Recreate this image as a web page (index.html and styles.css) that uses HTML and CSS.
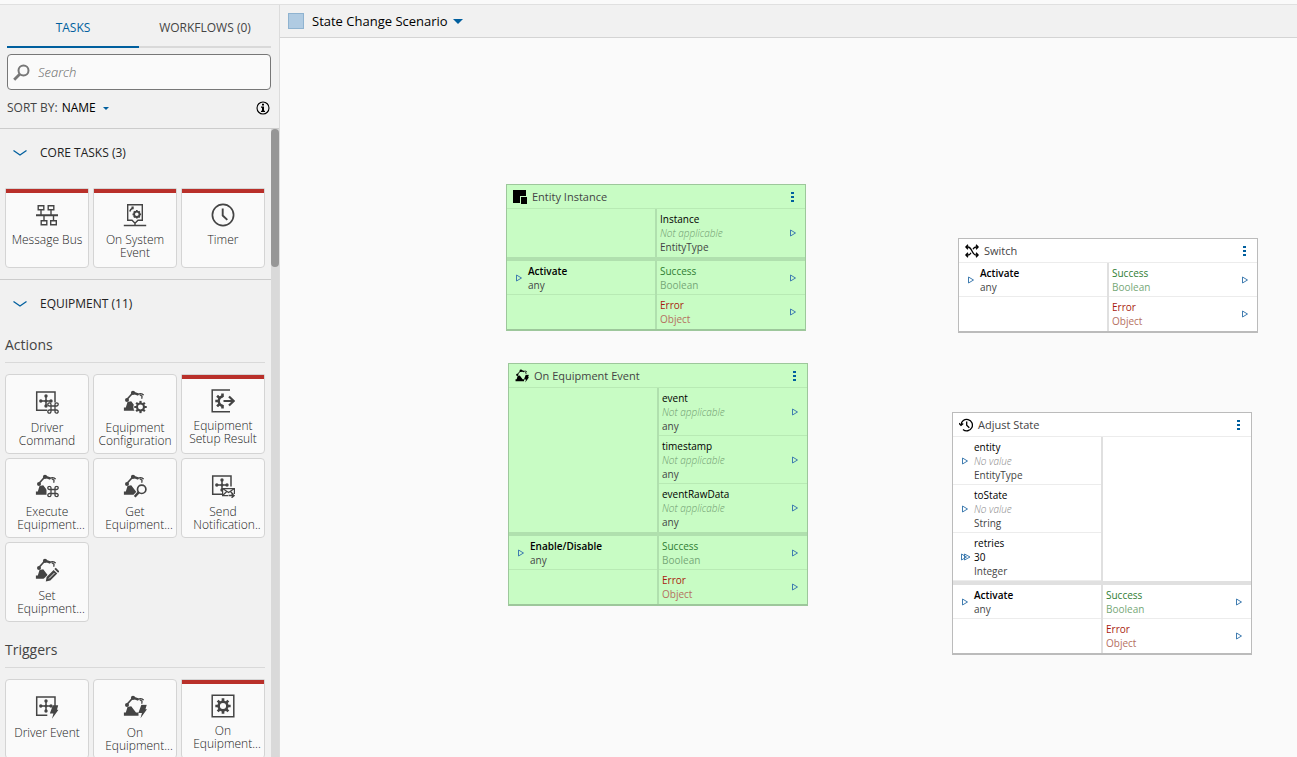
FILE: index.html
```html
<!DOCTYPE html>
<html lang="en">
<head>
<meta charset="utf-8">
<title>State Change Scenario</title>
<link rel="stylesheet" href="styles.css">
</head>
<body>
<svg class="symbols" aria-hidden="true">
  <defs>
    <symbol id="bus" viewBox="0 0 24 24"><g fill="none" stroke="currentColor" stroke-width="1.4"><path d="M3.2 2.700h5.600v4H3.200zM13.200 2.700h5.600v4h-5.600zM6.200 17.700h5.600v4H6.200zM15.700 17.700h5.600v4h-5.600zM6 6.700V12M16 6.700V12M9 12v5.700M18.500 12v5.700"/><path stroke-width="2" d="M1 12.200h22"/></g></symbol>
    <symbol id="sysevent" viewBox="0 0 24 24"><g fill="none" stroke="currentColor" stroke-width="1.400"><path d="M4.700 1.700h14.600v15.600H15l-3 2.900-3-2.900H4.700zM12 20v2.500M.8 22.500h22.400"/><circle cx="13.800" cy="11.300" r="2.700" stroke-width="1.800"/><path stroke-width="1.700" d="M13.800 7v1.600M13.800 14v1.600M9.500 11.300h1.600M16.500 11.300h1.600M10.800 8.300l1 1M15.800 13.300l1 1M16.800 8.300l-1 1M11.800 13.300l-1 1"/><path stroke-width="1.600" d="M6.800 8.500c.3-1.600 1.400-2.900 3-3.600"/><path stroke-width="2.200" d="M9.600 3.500v2.800"/></g></symbol>
    <symbol id="timer" viewBox="0 0 24 24"><g fill="none" stroke="currentColor" stroke-width="1.700"><circle cx="12" cy="12" r="10.600"/><path stroke-width="1.900" d="M11.700 5.500v7l4.600 4.400"/></g></symbol>
    <symbol id="driver" viewBox="0 0 24 24"><g fill="none" stroke="currentColor" stroke-width="1.500"><path d="M20 12.500V2H1.700v18.300h10.600"/><path d="M5 11h12M11 5.500v11"/></g><g fill="currentColor"><circle cx="5.800" cy="11" r="1.700"/><circle cx="16" cy="11" r="1.700"/><circle cx="11" cy="6" r="1.700"/><circle cx="11" cy="16" r="1.700"/><circle cx="11" cy="11" r="1.500"/></g></symbol>
    <symbol id="arm" viewBox="0 0 24 24"><g fill="currentColor"><path d="M.9 17.500h1.900l1.700-5.500 3.700-.8L13 17.500h2.500v3.300H.9z"/><circle cx="4" cy="10" r="2"/><circle cx="10" cy="2.900" r="2.100"/></g><g fill="none" stroke="currentColor"><path stroke-width="1.700" d="M4.300 9 10 2.700"/><path stroke-width="2.500" d="m10 2.600 5.500 2"/><path stroke-width="1.300" d="M15.300 4.600c1-1.400 3.700-1.600 5.400.6M16.800 4.800l2.200 1.400-.2 2.500"/></g></symbol>
    <symbol id="cmd" viewBox="0 0 12 12"><path fill="none" stroke="currentColor" stroke-width="1.300" d="M4 4h4v4H4zM4 4V2.500A1.600 1.600 0 1 0 2.400 4zM8 4h1.500A1.600 1.600 0 1 0 8 2.400zM8 8v1.500A1.600 1.600 0 1 0 9.600 8zM4 8H2.500A1.600 1.600 0 1 0 4 9.600z"/></symbol>
    <symbol id="cog" viewBox="0 0 24 24"><circle cx="12" cy="12" r="6.500" fill="none" stroke="currentColor" stroke-width="3.800"/><path stroke="currentColor" stroke-width="4" d="M12 .5V5M12 19v4.500M.5 12H5M19 12h4.500M4 4l3 3M17 17l3 3M20 4l-3 3M7 17l-3 3"/></symbol>
    <symbol id="bolt" viewBox="0 0 8 12"><path fill="currentColor" d="M3 0h4.800L6.600 4H8L2.200 12l1.300-4.700H.3z"/></symbol>

    <symbol id="driver-command" viewBox="0 0 24 24"><use href="#driver"/><use href="#cmd" x="12" y="12" width="12" height="12"/></symbol>
    <symbol id="driver-event" viewBox="0 0 24 24"><use href="#driver"/><use href="#bolt" x="14.500" y="10" width="9" height="14"/></symbol>
    <symbol id="arm-config" viewBox="0 0 24 24"><use href="#arm"/><circle cx="17.300" cy="17" r="7" fill="#fafafa"/><use href="#cog" x="11" y="10.500" width="13" height="13"/></symbol>
    <symbol id="arm-command" viewBox="0 0 24 24"><use href="#arm"/><path fill="#fafafa" d="M11.500 11h12v13h-12z"/><use href="#cmd" x="12" y="11.500" width="12" height="12"/></symbol>
    <symbol id="arm-get" viewBox="0 0 24 24"><use href="#arm"/><path fill="#fafafa" d="m10 21.500 4-4.500 3 5-3 2z"/><circle cx="18.700" cy="15.500" r="5.700" fill="#fafafa"/><g fill="none" stroke="currentColor"><circle cx="18.700" cy="15.300" r="4.200" stroke-width="1.700"/><path stroke-width="2.400" d="m15.600 18.400-3.900 4.400"/></g></symbol>
    <symbol id="arm-set" viewBox="0 0 24 24"><use href="#arm"/><path stroke="#fafafa" stroke-width="7" d="M10.500 24 23 11.500"/><path fill="currentColor" d="m10.800 23.500.8-4.600 7-7 3.700 3.700-7 7zM19.400 11l1.400-1.300 3.600 3.600-1.300 1.400z"/><path stroke="#fafafa" stroke-width=".9" d="m14 20.500 5.500-5.500"/></symbol>
    <symbol id="arm-event" viewBox="0 0 24 24"><use href="#arm"/><use href="#bolt" x="15" y="9.500" width="9" height="14"/></symbol>
    <symbol id="setup-result" viewBox="0 0 24 24"><path fill="none" stroke="currentColor" stroke-width="1.500" d="M19 1H1.200v21.800H19"/><path fill="none" stroke="currentColor" stroke-width="2.400" d="M12 7.200a4.900 4.900 0 0 0 0 9.700"/><path stroke="currentColor" stroke-width="2.600" d="M11.500 4.500V8M11.500 16v3.500M4.300 12h3M6.100 6.700l2.300 2.200M6.100 17.400l2.300-2.300"/><path fill="none" stroke="currentColor" stroke-width="2.200" d="M12.500 12h9.800M18 7.500l4.600 4.500-4.600 4.500"/></symbol>
    <symbol id="notify" viewBox="0 0 24 24"><use href="#driver"/><path fill="#fafafa" stroke="currentColor" stroke-width="1.200" d="M11.600 14.600h11.800v7H11.600z"/><path fill="none" stroke="currentColor" stroke-width="1.200" d="m11.600 14.600 6 4 5.800-4M11.600 21.500l4.200-4M23.400 21.500l-4-4"/><path stroke="#fafafa" stroke-width="3" d="M17 21.600h7"/><path fill="none" stroke="currentColor" stroke-width="1.500" d="M17.500 21.600h5M20.600 19.500l2.400 2.100-2.400 2.100"/></symbol>
    <symbol id="equip-cog" viewBox="0 0 24 24"><path fill="none" stroke="currentColor" stroke-width="1.500" d="M1.200 1.200h21.600v21.600H1.200z"/><use href="#cog" x="4" y="4" width="16" height="16"/></symbol>
    <symbol id="entity" viewBox="0 0 14 14"><path fill="currentColor" d="M0 0h13v6H7v7H0zM8 7h6v7H8z"/></symbol>
    <symbol id="switch" viewBox="0 0 14 14"><path fill="none" stroke="currentColor" stroke-width="1.300" d="M.5 3H3c4 0 4 8 8 8h2M.5 11H3c1.500 0 2.400-1 3-2.200M8 5.200C8.600 4 9.500 3 11 3h2M11 .8 13.200 3 11 5.200M11 8.800l2.200 2.200-2.200 2.200M3 .8.8 3 3 5.200M3 8.800.8 11 3 13.200"/></symbol>
    <symbol id="history" viewBox="0 0 14 14"><g fill="none" stroke="currentColor" stroke-width="1.300"><path d="M2 7a5.700 5.700 0 1 1 2 4.500"/><path d="M0 5.300 2 7.400l2.200-2M7.700 3.500v3.700l2.600 2.600"/></g></symbol>
    <symbol id="port" viewBox="0 0 8 8"><path fill="none" stroke="currentColor" d="M1.500 1v6l5-3z"/></symbol>
    <symbol id="port-multi" viewBox="0 0 10 8"><path fill="none" stroke="currentColor" d="M.5 1v6l5-3zM3.500 1v6l5.500-3z"/></symbol>
    <symbol id="dots" viewBox="0 0 3 11"><path fill="currentColor" d="M0 1h3v2H0zM0 5h3v2H0zM0 9h3v2H0z"/></symbol>
    <symbol id="chevron" viewBox="0 0 14 8"><path fill="none" stroke="currentColor" stroke-width="1.300" d="m.5 1.500 6.500 4.500 6.500-4.500"/></symbol>
    <symbol id="caret" viewBox="0 0 10 5"><path fill="currentColor" d="M0 0h10L5 5z"/></symbol>
  </defs>
</svg>

<div class="app">
  <aside class="sidebar">
    <div class="tools">
      <div class="tabs" role="tablist">
        <button class="tab tab-active" role="tab" aria-selected="true">TASKS</button>
        <button class="tab" role="tab" aria-selected="false">WORKFLOWS (0)</button>
      </div>
      <label class="search">
        <svg class="search-icon" viewBox="0 0 17 17" aria-hidden="true"><g fill="none" stroke="currentColor"><circle cx="10.500" cy="6.500" r="5" stroke-width="2"/><path stroke-width="2.800" d="m6.700 10.300-5.500 5.500"/></g></svg>
        <input class="search-input" type="search" placeholder="Search" aria-label="Search">
      </label>
      <div class="sort">
        <span class="sort-label">SORT BY:</span>
        <button class="sort-value">NAME <svg class="caret-small" aria-hidden="true"><use href="#caret"/></svg></button>
        <button class="info" aria-label="Information"><svg class="info-icon" viewBox="0 0 14 14"><circle cx="7" cy="7" r="6" fill="none" stroke="currentColor" stroke-width="1.100"/><path fill="currentColor" d="M6 2.700h2v1.800H6zM5 5.500h3v4.300h1V11H5V9.800h1V6.700H5z"/></svg></button>
      </div>
    </div>
    <div class="library">
      <div class="library-list">
        <section class="group">
          <button class="group-title"><svg class="chevron" aria-hidden="true"><use href="#chevron"/></svg>CORE TASKS (3)</button>
          <div class="cards">
            <button class="card card-flag"><svg class="card-icon"><use href="#bus"/></svg><span class="card-name">Message Bus</span></button>
            <button class="card card-flag"><svg class="card-icon"><use href="#sysevent"/></svg><span class="card-name">On System Event</span></button>
            <button class="card card-flag"><svg class="card-icon"><use href="#timer"/></svg><span class="card-name">Timer</span></button>
          </div>
        </section>
        <section class="group">
          <button class="group-title"><svg class="chevron" aria-hidden="true"><use href="#chevron"/></svg>EQUIPMENT (11)</button>
          <h3 class="subgroup">Actions</h3>
          <div class="cards">
            <button class="card"><svg class="card-icon"><use href="#driver-command"/></svg><span class="card-name">Driver Command</span></button>
            <button class="card"><svg class="card-icon"><use href="#arm-config"/></svg><span class="card-name">Equipment Configuration</span></button>
            <button class="card card-flag"><svg class="card-icon"><use href="#setup-result"/></svg><span class="card-name">Equipment Setup Result</span></button>
            <button class="card"><svg class="card-icon"><use href="#arm-command"/></svg><span class="card-name">Execute <span class="clipped">Equipment...</span></span></button>
            <button class="card"><svg class="card-icon"><use href="#arm-get"/></svg><span class="card-name">Get <span class="clipped">Equipment...</span></span></button>
            <button class="card"><svg class="card-icon"><use href="#notify"/></svg><span class="card-name">Send <span class="clipped">Notification..</span></span></button>
            <button class="card"><svg class="card-icon"><use href="#arm-set"/></svg><span class="card-name">Set <span class="clipped">Equipment...</span></span></button>
          </div>
          <h3 class="subgroup">Triggers</h3>
          <div class="cards">
            <button class="card"><svg class="card-icon"><use href="#driver-event"/></svg><span class="card-name">Driver Event</span></button>
            <button class="card"><svg class="card-icon"><use href="#arm-event"/></svg><span class="card-name">On <span class="clipped">Equipment...</span></span></button>
            <button class="card card-flag"><svg class="card-icon"><use href="#equip-cog"/></svg><span class="card-name">On <span class="clipped">Equipment...</span></span></button>
          </div>
        </section>
      </div>
      <div class="track" aria-hidden="true"><div class="thumb"></div></div>
    </div>
  </aside>

  <main class="main">
    <header class="topbar">
      <span class="swatch"></span>
      <button class="scenario">State Change Scenario <svg class="caret-large" aria-hidden="true"><use href="#caret"/></svg></button>
    </header>
    <div class="canvas">
      <article class="node node-green node-entity">
        <header class="node-head"><svg class="node-icon"><use href="#entity"/></svg><h4 class="node-title">Entity Instance</h4><button class="menu" aria-label="Menu"><svg class="dots"><use href="#dots"/></svg></button></header>
        <div class="node-body">
          <div class="col"></div>
          <div class="col">
            <div class="port-row row-out"><div class="port-text"><span class="p-name">Instance</span><span class="p-value">Not applicable</span><span class="p-type">EntityType</span></div><svg class="port"><use href="#port"/></svg></div>
          </div>
        </div>
        <div class="node-body node-signals">
          <div class="col">
            <div class="port-row"><svg class="port"><use href="#port"/></svg><div class="port-text"><strong class="p-name">Activate</strong><span class="p-type">any</span></div></div>
          </div>
          <div class="col">
            <div class="port-row row-out ok"><div class="port-text"><span class="p-name">Success</span><span class="p-type">Boolean</span></div><svg class="port"><use href="#port"/></svg></div>
            <div class="port-row row-out err"><div class="port-text"><span class="p-name">Error</span><span class="p-type">Object</span></div><svg class="port"><use href="#port"/></svg></div>
          </div>
        </div>
      </article>

      <article class="node node-green node-equipment">
        <header class="node-head"><svg class="node-icon"><use href="#arm-event"/></svg><h4 class="node-title">On Equipment Event</h4><button class="menu" aria-label="Menu"><svg class="dots"><use href="#dots"/></svg></button></header>
        <div class="node-body">
          <div class="col"></div>
          <div class="col">
            <div class="port-row row-out"><div class="port-text"><span class="p-name">event</span><span class="p-value">Not applicable</span><span class="p-type">any</span></div><svg class="port"><use href="#port"/></svg></div>
            <div class="port-row row-out"><div class="port-text"><span class="p-name">timestamp</span><span class="p-value">Not applicable</span><span class="p-type">any</span></div><svg class="port"><use href="#port"/></svg></div>
            <div class="port-row row-out"><div class="port-text"><span class="p-name">eventRawData</span><span class="p-value">Not applicable</span><span class="p-type">any</span></div><svg class="port"><use href="#port"/></svg></div>
          </div>
        </div>
        <div class="node-body node-signals">
          <div class="col">
            <div class="port-row"><svg class="port"><use href="#port"/></svg><div class="port-text"><strong class="p-name">Enable/Disable</strong><span class="p-type">any</span></div></div>
          </div>
          <div class="col">
            <div class="port-row row-out ok"><div class="port-text"><span class="p-name">Success</span><span class="p-type">Boolean</span></div><svg class="port"><use href="#port"/></svg></div>
            <div class="port-row row-out err"><div class="port-text"><span class="p-name">Error</span><span class="p-type">Object</span></div><svg class="port"><use href="#port"/></svg></div>
          </div>
        </div>
      </article>

      <article class="node node-switch">
        <header class="node-head"><svg class="node-icon"><use href="#switch"/></svg><h4 class="node-title">Switch</h4><button class="menu" aria-label="Menu"><svg class="dots"><use href="#dots"/></svg></button></header>
        <div class="node-body">
          <div class="col">
            <div class="port-row"><svg class="port"><use href="#port"/></svg><div class="port-text"><strong class="p-name">Activate</strong><span class="p-type">any</span></div></div>
          </div>
          <div class="col">
            <div class="port-row row-out ok"><div class="port-text"><span class="p-name">Success</span><span class="p-type">Boolean</span></div><svg class="port"><use href="#port"/></svg></div>
            <div class="port-row row-out err"><div class="port-text"><span class="p-name">Error</span><span class="p-type">Object</span></div><svg class="port"><use href="#port"/></svg></div>
          </div>
        </div>
      </article>

      <article class="node node-adjust">
        <header class="node-head"><svg class="node-icon"><use href="#history"/></svg><h4 class="node-title">Adjust State</h4><button class="menu" aria-label="Menu"><svg class="dots"><use href="#dots"/></svg></button></header>
        <div class="node-body">
          <div class="col">
            <div class="port-row"><svg class="port"><use href="#port"/></svg><div class="port-text"><span class="p-name">entity</span><span class="p-value">No value</span><span class="p-type">EntityType</span></div></div>
            <div class="port-row"><svg class="port"><use href="#port"/></svg><div class="port-text"><span class="p-name">toState</span><span class="p-value">No value</span><span class="p-type">String</span></div></div>
            <div class="port-row"><svg class="port port-multi"><use href="#port-multi"/></svg><div class="port-text"><span class="p-name">retries</span><span class="p-name">30</span><span class="p-type">Integer</span></div></div>
          </div>
          <div class="col"></div>
        </div>
        <div class="node-body node-signals">
          <div class="col">
            <div class="port-row"><svg class="port"><use href="#port"/></svg><div class="port-text"><strong class="p-name">Activate</strong><span class="p-type">any</span></div></div>
          </div>
          <div class="col">
            <div class="port-row row-out ok"><div class="port-text"><span class="p-name">Success</span><span class="p-type">Boolean</span></div><svg class="port"><use href="#port"/></svg></div>
            <div class="port-row row-out err"><div class="port-text"><span class="p-name">Error</span><span class="p-type">Object</span></div><svg class="port"><use href="#port"/></svg></div>
          </div>
        </div>
      </article>
    </div>
  </main>
</div>
</body>
</html>
```

FILE: styles.css
```css
* { box-sizing: border-box; }

body {
  margin: 0;
  padding-top: 4px;
  height: 100vh;
  overflow: hidden;
  background: #fafafa;
  color: #444;
  font: 12px/16px "Open Sans", "Noto Sans", sans-serif;
}

button {
  margin: 0;
  padding: 0;
  border: 0;
  background: none;
  color: inherit;
  font: inherit;
  cursor: pointer;
}

svg { display: block; flex: none; }
.symbols { position: absolute; width: 0; height: 0; }

.app {
  display: flex;
  height: 100%;
  border-top: 1px solid #e0e0e0;
}

/* Sidebar */
.sidebar {
  display: flex;
  flex-direction: column;
  width: 280px;
  flex: none;
  background: #f1f1f1;
  border-right: 1px solid #dcdcdc;
}

.tools {
  padding: 0 8px 0 7px;
  border-bottom: 1px solid #ccc;
}

.tabs { display: flex; }

.tab {
  flex: 1;
  height: 43px;
  padding-top: 4px;
  border-bottom: 2px solid #d9d9d9;
}

.tab-active {
  color: #005f9e;
  border-color: #005f9e;
}

.search {
  display: flex;
  align-items: center;
  gap: 8px;
  height: 36px;
  margin-top: 6px;
  padding: 0 5px;
  border: 1px solid #777;
  border-radius: 4px;
  background: #fafafa;
  color: #777;
}

.search-icon { width: 17px; height: 17px; }

.search-input {
  flex: 1;
  min-width: 0;
  padding: 0;
  border: 0;
  outline: 0;
  background: none;
  font: 13px/16px "Open Sans", "Noto Sans", sans-serif;
}

.search-input::placeholder { color: #666; font-style: italic; font-weight: 300; }

.sort {
  display: flex;
  align-items: center;
  gap: 4px;
  height: 38px;
  padding: 0 1px 2px 0;
}

.sort-value {
  display: flex;
  align-items: center;
  gap: 7px;
  color: #000;
}

.caret-small { width: 6px; height: 3px; color: #005f9e; }
.info { margin-left: auto; color: #000; }
.info-icon { width: 14px; height: 14px; }

.library {
  display: flex;
  flex: 1;
  min-height: 0;
}

.library-list {
  flex: 1;
  min-width: 0;
  overflow: hidden;
}

.track { width: 8px; background: #d9d9d9; }
.thumb { height: 22%; border-radius: 4px; background: #969696; }

.group + .group { border-top: 1px solid #ccc; }

.group-title {
  display: flex;
  align-items: center;
  gap: 13px;
  width: 100%;
  height: 48px;
  padding-left: 13px;
  color: #222;
}

.chevron { width: 14px; height: 8px; color: #005f9e; }

.subgroup {
  margin: 0 6px 0 5px;
  padding: 6px 0 7px;
  border-bottom: 1px solid #d9d9d9;
  font-size: 14px;
  line-height: 21px;
  font-weight: 400;
}

.cards {
  display: grid;
  grid-template-columns: repeat(3, 1fr);
  gap: 4px;
  padding: 11px 6px 11px 5px;
}

.card {
  display: flex;
  flex-direction: column;
  align-items: center;
  gap: 7px;
  height: 80px;
  padding-top: 15px;
  overflow: hidden;
  border: 1px solid #d4d4d4;
  border-radius: 4px;
  background: #fafafa;
  line-height: 13px;
}

.card-flag {
  gap: 6px;
  padding-top: 14px;
  border-radius: 1px 1px 4px 4px;
  box-shadow: inset 0 4px #b9302a;
}

.card-icon { width: 24px; height: 24px; }

.card-name {
  width: 76px;
  color: #222;
  font-weight: 300;
}

.clipped {
  display: block;
  padding-left: 8px;
  white-space: nowrap;
}

/* Main area */
.main {
  display: flex;
  flex-direction: column;
  flex: 1;
  min-width: 0;
}

.topbar {
  display: flex;
  align-items: center;
  gap: 8px;
  height: 33px;
  padding-left: 8px;
  border-bottom: 1px solid #d4d4d4;
  background: #f1f1f1;
}

.swatch {
  width: 16px;
  height: 16px;
  border: 1px solid #8fb3d0;
  background: #b0cbe2;
}

.scenario {
  display: flex;
  align-items: center;
  gap: 5px;
  color: #000;
  font-size: 13px;
}

.caret-large { width: 10px; height: 5px; color: #005f9e; }

.canvas { position: relative; flex: 1; }

/* Workflow nodes */
.node {
  --line: #e0e0e0;
  --rule: #ececec;
  position: absolute;
  width: 300px;
  border: 1px solid #bbb;
  border-bottom-width: 2px;
  background: #fff;
  font-size: 10px;
  line-height: 14px;
}

.node-green {
  --line: #b0e0ae;
  --rule: #b8eab4;
  border-color: #9dc79b;
  background: #c8fcc4;
}

.node-entity { left: 226px; top: 146px; }
.node-equipment { left: 228px; top: 325px; }
.node-switch { left: 678px; top: 200px; }
.node-adjust { left: 672px; top: 374px; }

.node-head {
  display: flex;
  align-items: center;
  gap: 5px;
  height: 24px;
  padding: 0 11px 0 6px;
  border-bottom: 1px solid var(--rule);
}

.node-icon { width: 14px; height: 14px; color: #000; }

.node-title {
  flex: 1;
  margin: 0;
  font-size: 11px;
  font-weight: 400;
}

.menu { color: #005f9e; }
.dots { width: 3px; height: 11px; }

.node-body { display: flex; }
.node-signals { border-top: 4px solid var(--line); }

.col { flex: 1; }
.col + .col { border-left: 2px solid var(--line); }

.port-row {
  display: flex;
  align-items: center;
  gap: 5px;
  padding: 3px 8px 2px;
  border-bottom: 1px solid var(--rule);
}

.col + .col .port-row:last-child { border-bottom: 0; padding-bottom: 3px; }

.row-out {
  justify-content: space-between;
  padding-left: 3px;
}

.port { width: 8px; height: 8px; color: #3f7cb0; }
.port-multi { width: 10px; margin-right: -2px; }
.port-text { display: flex; flex-direction: column; }

.p-name { color: #000; }
strong.p-name { font-weight: 600; }
.p-value { color: #888; font-style: italic; font-weight: 300; }
.node-green .p-value { color: #6f9a6e; }

.ok .p-name { color: #2f7d32; }
.ok .p-type { color: #76a878; }
.err .p-name { color: #a81b10; }
.err .p-type { color: #b5705f; }
```
